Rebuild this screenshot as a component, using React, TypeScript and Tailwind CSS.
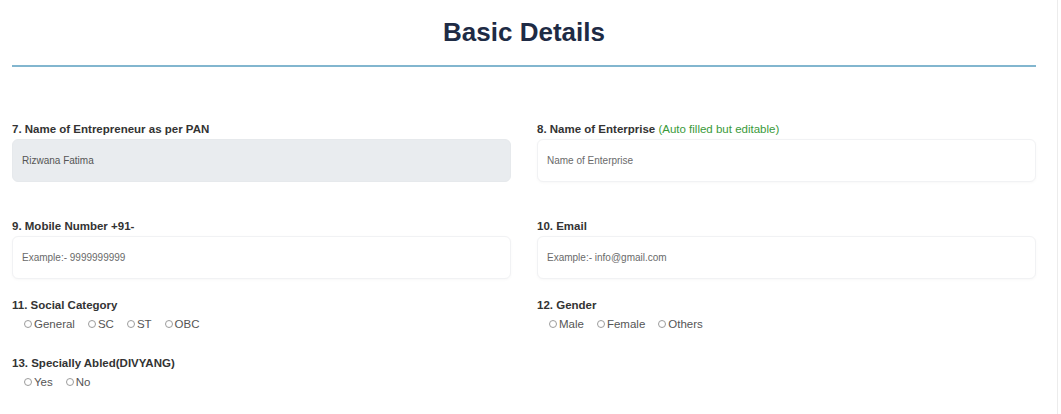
import React from 'react'

const SOCIAL = ['General', 'SC', 'ST', 'OBC']
const GENDER = ['Male', 'Female', 'Others']
const ABLED = ['Yes', 'No']

function Label({ children }: { children: React.ReactNode }) {
  return (
    <label className="block text-[11.5px] leading-4 font-bold text-[#333]">
      {children}
    </label>
  )
}

function Field({
  label,
  placeholder,
  value,
  filled,
}: {
  label: React.ReactNode
  placeholder?: string
  value?: string
  filled?: boolean
}) {
  return (
    <div className="flex flex-col gap-[2px]">
      <Label>{label}</Label>
      <input
        readOnly
        value={value}
        placeholder={placeholder}
        className={
          filled
            ? 'h-[43px] w-full rounded-[6px] border border-[#e6e9ec] bg-[#e9ecef] pl-[9px] text-[10px] text-[#555] outline-none'
            : 'h-[43px] w-full rounded-[6px] border border-[#f1f2f4] bg-white pl-[9px] text-[10px] text-[#666] shadow-[0_1px_3px_rgba(0,0,0,0.03)] outline-none placeholder:text-[#6a6a6a]'
        }
      />
    </div>
  )
}

function RadioGroup({ name, label, options }: { name: string; label: string; options: string[] }) {
  return (
    <div className="flex flex-col gap-[3px]">
      <Label>{label}</Label>
      <div className="ml-3 flex items-center gap-[13px] text-[11.5px] leading-4 text-[#555]">
        {options.map((o) => (
          <span key={name + o} className="flex items-center gap-[2px]">
            <span className="inline-block h-[8px] w-[8px] rounded-full border border-[#9c9c9c]" />
            {o}
          </span>
        ))}
      </div>
    </div>
  )
}

export default function App() {
  return (
    <div className="h-[414px] w-[1058px] border-r border-[#ececec] bg-white font-['Liberation_Sans',Arial,sans-serif]">
      <div className="ml-3 w-[1024px]">
        <h2 className="pt-[17px] text-center text-[26px] leading-[30px] font-bold text-[#1e2b45]">
          Basic Details
        </h2>
        <div className="mt-[18px] h-[2px] bg-[#82b6cf]" />

        {/* name row */}
        <div className="mt-[54px] grid grid-cols-2 gap-x-[26px]">
          <Field label="7. Name of Entrepreneur as per PAN" value="Rizwana Fatima" filled />
          <Field
            label={
              <>
                8. Name of Enterprise{' '}
                <span className="font-normal text-[#3a9a3a]">(Auto filled but editable)</span>
              </>
            }
            placeholder="Name of Enterprise"
          />
        </div>

        {/* contact row */}
        <div className="mt-[36px] grid grid-cols-2 gap-x-[26px]">
          <Field label="9. Mobile Number +91-" placeholder="Example:- 9999999999" />
          <Field label="10. Email" placeholder="Example:- info@gmail.com" />
        </div>

        <div className="mt-[18px] grid grid-cols-2 gap-x-[26px]">
          <RadioGroup name="social" label="11. Social Category" options={SOCIAL} />
          <RadioGroup name="gender" label="12. Gender" options={GENDER} />
        </div>

        <div className="mt-[23px] grid grid-cols-2 gap-x-[26px]">
          <RadioGroup name="abled" label="13. Specially Abled(DIVYANG)" options={ABLED} />
        </div>
      </div>
    </div>
  )
}
